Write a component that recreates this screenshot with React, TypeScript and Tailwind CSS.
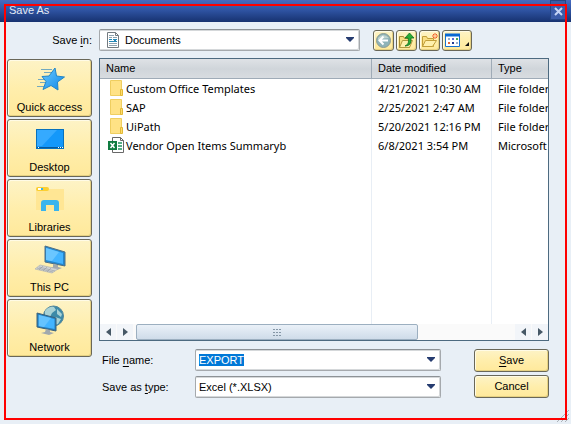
import { useEffect, useRef, type ReactNode } from "react";

const uiFont = "font-['Liberation_Sans',Arial,sans-serif]";
const listFont = "font-['Noto_Sans','Segoe_UI',sans-serif]";
const raised =
  "border border-[#696758] rounded-[3px] bg-linear-to-b from-[#fdf3c6] via-[#ffeeac] to-[#ffe99b] shadow-[inset_1px_1px_0_#fffbe6,inset_-1px_-1px_0_#e6d182]";
const field =
  "h-[22px] w-full appearance-none rounded-[2px] border border-[#a5a9ad] border-t-[#8d9296] bg-white text-[11px] text-black outline-none shadow-[inset_0_1px_0_#d5d8da,inset_-1px_-1px_0_#d5d8da]";

function StarIcon() {
  return (
    <svg width="32" height="28" viewBox="0 0 32 28">
      <defs>
        <linearGradient id="star" x1="0" y1="0" x2="1" y2="1">
          <stop offset="0" stopColor="#6ccaff" />
          <stop offset="1" stopColor="#0b86e8" />
        </linearGradient>
      </defs>
      <path d="M7 4.500h11M10 7.500h8M4 14.500h8M6 17.500h8M3 21.500h8" stroke="#73a9bf" strokeWidth="1" />
      <path d="M21 3l1.500 8 8 1-7 5 .5 8-7-4.500-8 4 3-8-4-5 7-.5z" fill="url(#star)" stroke="#2185c7" />
    </svg>
  );
}

function DesktopIcon() {
  return (
    <svg width="32" height="28" viewBox="0 0 32 28">
      <rect x="2.500" y="4.500" width="27" height="19" fill="#1498fa" stroke="#0871bd" />
      <path d="M3 5h20L8 21H3z" fill="#35aaff" />
      <path d="M3 22.500h26" stroke="#07599a" />
      <path d="M4 22.500h1M24 22.500h1M26 22.500h1M28 22.500h1" stroke="#fff" />
    </svg>
  );
}

function LibrariesIcon() {
  return (
    <svg width="32" height="28" viewBox="0 0 32 28">
      <path d="M2 4h28v21H2z" fill="#ffe694" />
      <rect x="2" y="2" width="13" height="4" rx="2" fill="#fbcf32" />
      <path d="M4 4h3" stroke="#fff" strokeWidth="2" />
      <path d="M7 4h2" stroke="#35b3ef" strokeWidth="2" />
      <path d="M7 26v-8q0-3 3-3h12q3 0 3 3v8h-5v-6h-8v6z" fill="#38b4ee" />
    </svg>
  );
}

function ComputerIcon() {
  return (
    <svg width="32" height="30" viewBox="0 0 32 30">
      <path d="M11 1l20 6v14l-20-4z" fill="#2387ce" stroke="#4e6f84" />
      <path d="M12 3l17 5v11l-17-4z" fill="#43b4ff" />
      <path d="M12 3l13 4-7 9-6-1z" fill="#6ac6ff" />
      <path d="M19 19l5 1v2l4 1-5 2-7-2 3-1z" fill="#a2a9ad" />
      <path d="M6 20l18 4-6 4-17-4z" fill="#d1d4d6" stroke="#aeb1b2" strokeWidth=".7" />
      <path d="M5 22l16 4M3 23l16 4M9 21l-4 4M13 22l-4 4M17 23l-4 4" stroke="#959b9f" strokeWidth=".6" />
    </svg>
  );
}

function NetworkIcon() {
  return (
    <svg width="32" height="30" viewBox="0 0 32 30">
      <circle cx="19.500" cy="11" r="10" fill="#3d8aa8" stroke="#53859a" />
      <path d="M11 6q4-5 9-4l2 3-4 3-2 4-5-1zM23 4l5 5-1 3-4-3zM21 12l6 2-3 5-4 1z" fill="#a9d2d5" />
      <path d="M3 8l19 5v13L3 22z" fill="#257fbd" stroke="#3c627b" />
      <path d="M4.500 10l16 4v10l-16-3z" fill="#43b4ff" />
      <path d="M5 10l12 3-7 9-5-1z" fill="#65c3fe" />
      <path d="M12 24l4 1v2l4 1-5 2-8-2 4-1z" fill="#a1a9ae" />
    </svg>
  );
}

function FolderIcon() {
  return (
    <svg className="ml-[10px] shrink-0" width="14" height="17" viewBox="0 0 14 17">
      <path d="M.5.500h11v15H.5z" fill="#ffe285" stroke="#efce60" />
      <path d="M10.500 9.500h2v6h-2z" fill="#ffdc6d" stroke="#e2b936" />
    </svg>
  );
}

function ExcelIcon() {
  return (
    <svg className="ml-2 shrink-0" width="17" height="17" viewBox="0 0 17 17">
      <path d="M4.500.5h8l3 3v12h-11z" fill="#fff" stroke="#686868" />
      <path d="M12.500.5v3h3" fill="none" stroke="#686868" />
      <path d="M10 6h4M10 9h4M10 12h4" stroke="#21945d" strokeWidth="1.500" />
      <path d="M0 4h9v9H0z" fill="#107c41" />
      <path d="M2.500 6l4 5M6.500 6l-4 5" stroke="#fff" strokeWidth="1.500" />
    </svg>
  );
}

function DocumentIcon() {
  return (
    <svg width="12" height="16" viewBox="0 0 12 16">
      <path d="M.5.5h8l3 3v12H.5z" fill="#fff" stroke="#737b80" />
      <path d="M8.500.5v3h3" fill="none" stroke="#737b80" />
      <path d="M2 3.500h5M2 5.500h3M6 5.500h4M2 11.500h8M2 13.500h8" stroke="#8fa3ae" />
      <path d="M2 7.500h3M6 7.500h4M2 9.500h8" stroke="#2487b5" />
      <path d="M7 8h2v2H7z" fill="#2487b5" />
    </svg>
  );
}

function BackIcon() {
  return (
    <svg width="17" height="17" viewBox="0 0 17 17">
      <circle cx="8.500" cy="8.500" r="7" fill="#8fb3b8" stroke="#8d9c91" />
      <path d="M3 6q5-6 11 0-5 0-11 2z" fill="#bfd3ce" />
      <path d="M8.500 4.500l-4 4 4 4M5 8.500h8" fill="none" stroke="#fff" strokeWidth="2" />
    </svg>
  );
}

function UpIcon() {
  return (
    <svg width="17" height="17" viewBox="0 0 17 17">
      <path d="M1.500 15.500v-11h4l1 2h5v9z" fill="#f8df84" stroke="#a98e36" />
      <path d="M1.500 15.500l3-7h10l-3 7z" fill="#fff0ad" stroke="#b2993f" />
      <path d="M7 14q5-2 3-8H7l4.500-5L16 6h-3q1 8-6 8z" fill="#29ae36" stroke="#12701f" strokeWidth=".8" />
    </svg>
  );
}

function NewFolderIcon() {
  return (
    <svg width="18" height="17" viewBox="0 0 18 17">
      <path d="M1.500 14.500v-10h4l1 2h6v8z" fill="#f9de83" stroke="#c29f39" />
      <path d="M1.500 14.500l3-6h11l-4 6z" fill="#fff0ad" stroke="#c29f39" />
      <path d="M14 1v6M11 4h6M12 2l4 4M16 2l-4 4" stroke="#f05a28" />
      <circle cx="14" cy="4" r="1" fill="#fff2bd" />
    </svg>
  );
}

function ViewIcon() {
  return (
    <svg width="26" height="17" viewBox="0 0 26 17">
      <path d="M1.500 2.500h14v12h-14z" fill="#fff" stroke="#1673d1" />
      <path d="M1 3h15" stroke="#0969d3" strokeWidth="3" />
      <path d="M4 6h2v2H4zM12 10h2v2h-2z" fill="#9aafcc" />
      <path d="M8 6h2v2H8z" fill="#5b6dd8" />
      <path d="M12 6h2v2h-2z" fill="#48a65a" />
      <path d="M4 10h2v2H4z" fill="#e26739" />
      <path d="M8 10h2v2H8z" fill="#243c91" />
      <path d="M25 10v4h-4z" fill="#111" />
    </svg>
  );
}

function DropArrow() {
  return (
    <svg className="pointer-events-none absolute top-2 right-[6px]" width="8" height="5" viewBox="0 0 8 5">
      <path d="M0 0h8v1L4 5 0 1z" fill="#263c70" />
    </svg>
  );
}

function ScrollArrow({ label, path }: { label: string; path: string }) {
  return (
    <button aria-label={label} className="flex w-4 shrink-0 items-center justify-center bg-[#f2f5f9]">
      <svg width="5" height="8" viewBox="0 0 5 8">
        <path d={path} fill="#465866" />
      </svg>
    </button>
  );
}

const LEFT = "M5 0v8L0 4z";
const RIGHT = "M0 0v8l5-4z";

const places: { name: string; icon: ReactNode }[] = [
  { name: "Quick access", icon: <StarIcon /> },
  { name: "Desktop", icon: <DesktopIcon /> },
  { name: "Libraries", icon: <LibrariesIcon /> },
  { name: "This PC", icon: <ComputerIcon /> },
  { name: "Network", icon: <NetworkIcon /> },
];

const tools = [
  { name: "Back", icon: <BackIcon />, width: "w-[21px]" },
  { name: "Up one level", icon: <UpIcon />, width: "w-[21px]" },
  { name: "Create new folder", icon: <NewFolderIcon />, width: "w-[21px]" },
  { name: "View menu", icon: <ViewIcon />, width: "w-[30px]" },
];

const files = [
  { name: "Custom Office Templates", date: "4/21/2021 10:30 AM", type: "File folder" },
  { name: "SAP", date: "2/25/2021 2:47 AM", type: "File folder" },
  { name: "UiPath", date: "5/20/2021 12:16 PM", type: "File folder" },
  { name: "Vendor Open Items Summaryb", date: "6/8/2021 3:54 PM", type: "Microsoft" },
];

export default function App() {
  const nameRef = useRef<HTMLInputElement>(null);

  useEffect(() => {
    nameRef.current?.focus();
    nameRef.current?.select();
  }, []);

  return (
    <main className={`relative flex min-h-screen flex-col bg-[#e8eff6] text-[11px] text-black ${uiFont}`}>
      <header className="flex h-[22px] shrink-0 items-start justify-between bg-linear-to-b from-[#466bc1] via-[#2d519f] to-[#173270] pr-[5px] pl-[9px]">
        <h1 className="leading-5 text-[#e4eaf5]">Save As</h1>
        <button aria-label="Close" className="flex h-5 w-4 items-center justify-center border border-[#254684] bg-[#3a5ca8] pt-[3px]">
          <svg width="9" height="9" viewBox="0 0 9 9">
            <path d="M1 1l7 7M8 1L1 8" stroke="#c4d4f5" strokeWidth="2" />
          </svg>
        </button>
      </header>

      <div className="flex h-9 shrink-0 items-center pr-[22px] pl-[7px]">
        <label htmlFor="folder" className="w-[85px] shrink-0 text-right">
          Save <span className="underline underline-offset-2">i</span>n:
        </label>
        <div className="relative ml-[7px] max-w-[261px] flex-1">
          <select id="folder" className={`${field} pl-[25px]`}>
            <option>Documents</option>
          </select>
          <span className="pointer-events-none absolute top-[3px] left-2">
            <DocumentIcon />
          </span>
          <DropArrow />
        </div>
        <div className="ml-[13px] flex shrink-0 gap-[2px]">
          {tools.map((tool) => (
            <button key={tool.name} aria-label={tool.name} className={`flex h-[21px] items-center justify-center ${tool.width} ${raised}`}>
              {tool.icon}
            </button>
          ))}
        </div>
      </div>

      <div className="flex flex-1 gap-[7px] pr-[22px] pb-6 pl-[7px]">
        <nav className="mt-px flex w-[85px] shrink-0 flex-col gap-[2px]">
          {places.map((place) => (
            <button key={place.name} className={`flex h-[58px] flex-col items-center justify-between pt-[5px] pb-px ${raised}`}>
              {place.icon}
              <span className="leading-4">{place.name}</span>
            </button>
          ))}
        </nav>

        <div className="min-w-0 flex-1">
          <div className="border border-[#4d6a80] bg-white">
            <table className="w-full table-fixed border-separate border-spacing-0">
              <thead>
                <tr className="h-5 bg-linear-to-b from-[#dfe2e6] via-[#d0d5da] to-[#d9dde1] text-left">
                  <th className="border-b border-[#9fabb7] p-0 pl-[6px] font-normal">Name</th>
                  <th className="w-[120px] border-b border-l border-[#9fabb7] p-0 pl-[6px] font-normal">Date modified</th>
                  <th className="w-[57px] border-b border-l border-[#9fabb7] p-0 pl-[6px] font-normal">Type</th>
                </tr>
              </thead>
              <tbody className={listFont}>
                {files.map((file) => (
                  <tr key={file.name} className="h-[19px] leading-[19px] whitespace-nowrap">
                    <td className="overflow-hidden p-0">
                      <span className="flex h-[19px] items-center">
                        <span className="flex w-[26px] shrink-0">
                          {file.type === "Microsoft" ? <ExcelIcon /> : <FolderIcon />}
                        </span>
                        {file.name}
                      </span>
                    </td>
                    <td className="overflow-hidden border-l border-[#e8eef5] p-0 pl-[6px]">{file.date}</td>
                    <td className="overflow-hidden border-l border-[#e8eef5] p-0 pl-[6px]">{file.type}</td>
                  </tr>
                ))}
                <tr className="h-[169px]">
                  <td className="p-0" />
                  <td className="border-l border-[#e8eef5] p-0" />
                  <td className="border-l border-[#e8eef5] p-0" />
                </tr>
              </tbody>
            </table>
            <div className="flex h-4 gap-px bg-[#fafafa]">
              <ScrollArrow label="Scroll to start" path={LEFT} />
              <ScrollArrow label="Scroll left" path={RIGHT} />
              <div className="min-w-0 flex-1 px-[2px]">
                <div className="flex h-4 w-3/4 items-center justify-center rounded-[2px] border border-[#9cafc0] bg-linear-to-b from-[#eaf1f8] to-[#cfdce9]">
                  <svg width="8" height="7" viewBox="0 0 8 7">
                    <path d="M0 .5h8M0 3.500h8M0 6.500h8" stroke="#8496a6" strokeDasharray="2 1" />
                  </svg>
                </div>
              </div>
              <ScrollArrow label="Scroll right" path={LEFT} />
              <ScrollArrow label="Scroll to end" path={RIGHT} />
            </div>
          </div>

          <form className="mt-2 flex justify-between gap-4 pl-[3px]" onSubmit={(event) => event.preventDefault()}>
            <div className="flex max-w-[339px] flex-1 flex-col gap-[5px]">
              <div className="flex items-center">
                <label htmlFor="filename" className="w-[93px] shrink-0">
                  File <span className="underline underline-offset-2">n</span>ame:
                </label>
                <div className="relative flex-1">
                  <input
                    ref={nameRef}
                    id="filename"
                    defaultValue="EXPORT"
                    className={`${field} px-[3px] caret-transparent selection:bg-[#0078d7] selection:text-white`}
                  />
                  <DropArrow />
                </div>
              </div>
              <div className="flex items-center">
                <label htmlFor="filetype" className="w-[93px] shrink-0">
                  Save as <span className="underline underline-offset-2">t</span>ype:
                </label>
                <div className="relative flex-1">
                  <select id="filetype" className={`${field} pl-[3px]`}>
                    <option>Excel (*.XLSX)</option>
                  </select>
                  <DropArrow />
                </div>
              </div>
            </div>
            <div className="flex w-[75px] shrink-0 flex-col gap-[3px]">
              <button type="submit" className={`h-[23px] ${raised}`}>
                <span className="underline underline-offset-2">S</span>ave
              </button>
              <button type="button" className={`h-[23px] ${raised}`}>
                Cancel
              </button>
            </div>
          </form>
        </div>
      </div>

      <svg className="absolute right-0 bottom-0" width="16" height="16" viewBox="0 0 16 16">
        <path d="M2 14L14 2M6 14l8-8M10 14l4-4" stroke="#acb3ba" />
      </svg>
      <div className="pointer-events-none absolute inset-1 border-2 border-[#ff0000]" />
    </main>
  );
}
